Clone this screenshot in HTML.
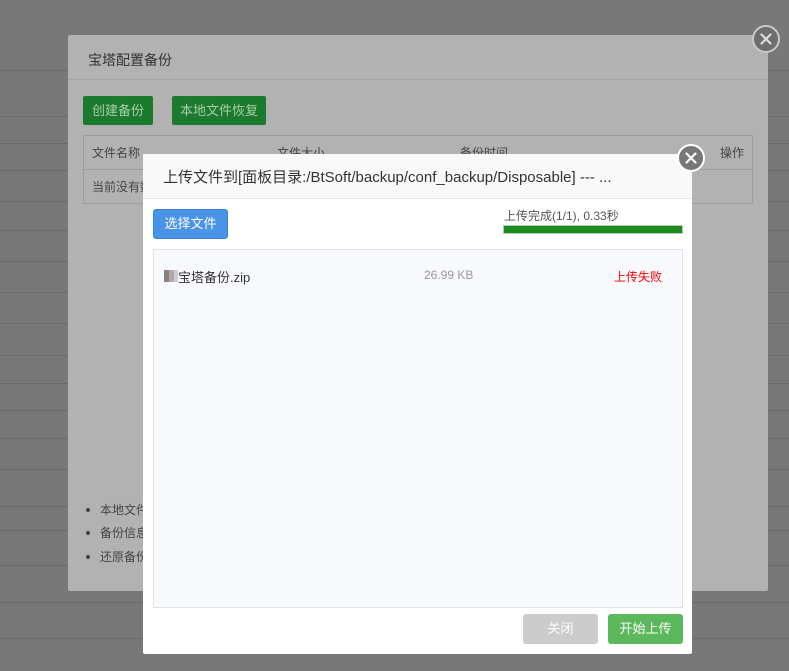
<!DOCTYPE html>
<html><head><meta charset="utf-8"><style>
*{margin:0;padding:0;box-sizing:border-box}
body{width:789px;height:671px;overflow:hidden;position:relative;background:#787878;font-family:"Liberation Sans","Noto Sans CJK SC",sans-serif;font-size:12px}
.ln{position:absolute;left:0;width:789px;height:1px;background:#6a6a6a}
.outer{position:absolute;left:68px;top:35px;width:700px;height:556px;background:#b2b2b2;border-radius:2px}
.ohd{height:45px;border-bottom:1px solid #a6a6a6;padding:15px 0 0 20px;font-size:14px;color:#333}
.gbtn{position:absolute;top:61px;height:29px;background:#1b7a2d;color:#a8cdaa;font-size:13px;line-height:29px;text-align:center;border-radius:2px}
.tbl{position:absolute;left:15px;top:100px;width:670px;height:69px;border:1px solid #9d9d9d}
.tbl .r1{height:34px;border-bottom:1px solid #9d9d9d;color:#444;font-size:12px;line-height:34px;position:relative}
.tbl span{position:absolute}
.li{position:absolute;left:18px;color:#444;font-size:12px}
.li:before{content:"";position:absolute;left:0;top:7px;width:4px;height:4px;border-radius:2px;background:#444}
.li b{font-weight:normal;margin-left:14px}
.x{position:absolute;width:28px;height:28px;border-radius:50%;background:#6e6e6e;border:2px solid #c8c8c8}
.x svg{position:absolute;left:6px;top:6px}
.inner{position:absolute;left:143px;top:154px;width:549px;height:500px;background:#fff;border-radius:2px}
.ihd{height:45px;background:#f9f9f9;border-bottom:1px solid #e8e8e8;padding:12px 0 0 20px;font-size:15px;color:#333}
.sel{position:absolute;left:10px;top:55px;width:75px;height:30px;background:#4a94e8;border:1px solid #3a82d4;border-radius:3px;color:#fff;font-size:13px;line-height:28px;text-align:center}
.prog{position:absolute;left:361px;top:53px;color:#555;font-size:12px}
.bar{position:absolute;left:360px;top:71px;width:180px;height:9px;background:#1c8a1c;border:1px solid #b5c9b5}
.box{position:absolute;left:10px;top:95px;width:530px;height:359px;background:#f8f9fd;border:1px solid #e0e2e8}
.btn{position:absolute;top:460px;height:30px;border-radius:3px;color:#fff;font-size:13px;line-height:30px;text-align:center}
</style></head><body>
<div class="ln" style="top:70px"></div><div class="ln" style="top:116px"></div><div class="ln" style="top:143px"></div><div class="ln" style="top:170px"></div><div class="ln" style="top:201px"></div><div class="ln" style="top:230px"></div><div class="ln" style="top:261px"></div><div class="ln" style="top:292px"></div><div class="ln" style="top:323px"></div><div class="ln" style="top:355px"></div><div class="ln" style="top:383px"></div><div class="ln" style="top:410px"></div><div class="ln" style="top:438px"></div><div class="ln" style="top:469px"></div><div class="ln" style="top:506px"></div><div class="ln" style="top:530px"></div><div class="ln" style="top:565px"></div><div class="ln" style="top:602px"></div><div class="ln" style="top:638px"></div>
<div class="outer">
<div class="ohd">宝塔配置备份</div>
<div class="gbtn" style="left:15px;width:70px">创建备份</div>
<div class="gbtn" style="left:104px;width:94px">本地文件恢复</div>
<div class="tbl"><div class="r1"><span style="left:8px">文件名称</span><span style="left:193px">文件大小</span><span style="left:376px">备份时间</span><span style="right:8px">操作</span></div>
<div style="line-height:34px;color:#444;padding-left:8px">当前没有数据</div></div>
<div class="li" style="top:466px"><b>本地文件</b></div>
<div class="li" style="top:489px"><b>备份信息</b></div>
<div class="li" style="top:513px"><b>还原备份</b></div>
</div>
<div class="x" style="left:752px;top:25px"><svg width="12" height="12" viewBox="0 0 12 12"><path d="M1.5 1.5L10.5 10.5M10.5 1.5L1.5 10.5" stroke="#ddd" stroke-width="2.2" stroke-linecap="round"/></svg></div>
<div class="inner">
<div class="ihd">上传文件到[面板目录:/BtSoft/backup/conf_backup/Disposable] --- ...</div>
<div class="sel">选择文件</div>
<div class="prog">上传完成(1/1), 0.33秒</div>
<div class="bar"></div>
<div class="box">
<div style="position:absolute;left:10px;top:20px;width:14px;height:12px;background:linear-gradient(90deg,#8a8080 0 5px,#b0a8a8 5px 10px,#d0ccd0 10px);"></div>
<div style="position:absolute;left:24px;top:17px;color:#333;font-size:13px">宝塔备份.zip</div>
<div style="position:absolute;left:270px;top:18px;color:#999;font-size:12px">26.99 KB</div>
<div style="position:absolute;left:460px;top:18px;color:#f00;font-size:12px">上传失败</div>
</div>
<div class="btn" style="left:380px;width:75px;background:#ccc">关闭</div>
<div class="btn" style="left:465px;width:75px;background:#5cb85c">开始上传</div>
</div>
<div class="x" style="left:677px;top:144px;background:#777;border-color:#fff"><svg width="12" height="12" viewBox="0 0 12 12"><path d="M1.5 1.5L10.5 10.5M10.5 1.5L1.5 10.5" stroke="#fff" stroke-width="2.2" stroke-linecap="round"/></svg></div>
</body></html>
